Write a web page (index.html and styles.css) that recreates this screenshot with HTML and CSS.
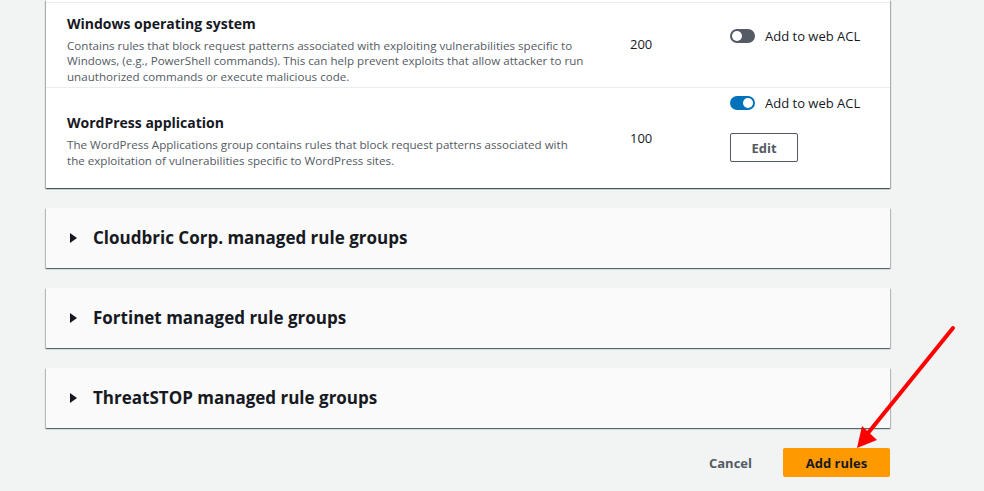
FILE: index.html
```html
<!DOCTYPE html>
<html lang="en">
<head>
<meta charset="utf-8">
<title>Add managed rule groups</title>
<link rel="stylesheet" href="styles.css">
</head>
<body>
<div class="page">
  <section class="panel">
    <div class="row row-windows">
      <div class="info">
        <div class="rule-title">Windows operating system</div>
        <div class="rule-desc">Contains rules that block request patterns associated with exploiting vulnerabilities specific to Windows, (e.g., PowerShell commands). This can help prevent exploits that allow attacker to run unauthorized commands or execute malicious code.</div>
      </div>
      <div class="capacity">200</div>
      <div class="actions">
        <label class="toggle-line"><span class="toggle"></span><span>Add to web ACL</span></label>
      </div>
    </div>
    <div class="row row-wordpress">
      <div class="info">
        <div class="rule-title">WordPress application</div>
        <div class="rule-desc">The WordPress Applications group contains rules that block request patterns associated with the exploitation of vulnerabilities specific to WordPress sites.</div>
      </div>
      <div class="capacity">100</div>
      <div class="actions">
        <label class="toggle-line"><span class="toggle on"></span><span>Add to web ACL</span></label>
        <button class="btn-edit">Edit</button>
      </div>
    </div>
  </section>

  <section class="expander"><span class="caret"></span><h2>Cloudbric Corp. managed rule groups</h2></section>
  <section class="expander"><span class="caret"></span><h2>Fortinet managed rule groups</h2></section>
  <section class="expander"><span class="caret"></span><h2>ThreatSTOP managed rule groups</h2></section>

  <div class="footer">
    <button class="btn-link">Cancel</button>
    <button class="btn-primary">Add rules</button>
  </div>
</div>
<svg class="annotation" width="984" height="491" viewBox="0 0 984 491">
  <line x1="953" y1="328" x2="864" y2="438" stroke="#ff0000" stroke-width="4" stroke-linecap="round"/>
  <polygon points="857,448 862,426 877,440" fill="#ff0000"/>
</svg>
</body>
</html>
```
FILE: styles.css
```css
* { box-sizing: border-box; }
html, body { margin: 0; padding: 0; }
body {
  background: #f2f3f3;
  font-family: "Open Sans", "Noto Sans", "Liberation Sans", Arial, sans-serif;
  color: #16191f;
  width: 984px;
  height: 491px;
  overflow: hidden;
  position: relative;
}
.page {
  width: 844px;
  margin-left: 46px;
  display: flex;
  flex-direction: column;
  gap: 20px;
}
.panel {
  background: #fff;
  padding-top: 2px;
  box-shadow: 0 1px 1px 0 rgba(0,28,36,.5), 1px 1px 1px 0 rgba(0,28,36,.25), -1px 1px 1px 0 rgba(0,28,36,.25);
}
.row {
  display: grid;
  grid-template-columns: 563px 100px 1fr;
  padding-left: 21px;
  border-top: 1px solid #eaeded;
}
.row-windows { height: 85px; }
.row-wordpress { height: 101px; }
.info { align-self: center; }
.row-windows .info { padding-top: 8px; }
.row-wordpress .info { padding-top: 5px; }
.rule-title {
  font-size: 14px;
  font-weight: 700;
  line-height: 20px;
  margin-bottom: 4px;
}
.rule-desc {
  max-width: 521px;
  font-size: 11.6px;
  line-height: 15.5px;
  color: #545b64;
}
.capacity {
  align-self: center;
  font-size: 13px;
  color: #16191f;
}
.row-windows .capacity { padding-bottom: 2px; }
.actions {
  display: flex;
  flex-direction: column;
  align-items: flex-start;
}
.row-windows .actions { padding-top: 23px; }
.row-wordpress .actions { padding-top: 5px; }
.toggle-line {
  display: flex;
  align-items: center;
  gap: 10px;
  height: 20px;
  font-size: 13px;
  color: #16191f;
}
.toggle {
  width: 25px;
  height: 14px;
  border-radius: 7px;
  background: #545b64;
  position: relative;
}
.toggle::after {
  content: "";
  position: absolute;
  top: 2px;
  left: 2px;
  width: 10px;
  height: 10px;
  border-radius: 50%;
  background: #fff;
}
.toggle.on { background: #0073bb; }
.toggle.on::after { left: 13px; }
.btn-edit {
  margin-top: 20px;
  width: 68px;
  height: 29px;
  background: #fff;
  border: 1px solid #545b64;
  border-radius: 2px;
  font-family: inherit;
  font-size: 13px;
  font-weight: 700;
  color: #545b64;
  padding: 0;
}
.expander {
  height: 60px;
  background: #fafafa;
  display: flex;
  align-items: center;
  padding-left: 24px;
  box-shadow: 0 1px 1px 0 rgba(0,28,36,.45), 1px 1px 1px 0 rgba(0,28,36,.2), -1px 1px 1px 0 rgba(0,28,36,.2);
}
.caret {
  width: 0;
  height: 0;
  border-top: 5px solid transparent;
  border-bottom: 5px solid transparent;
  border-left: 7px solid #16191f;
  margin-right: 16px;
}
.expander h2 {
  margin: 0;
  font-size: 17px;
  line-height: 24px;
  font-weight: 700;
  color: #16191f;
}
.footer {
  display: flex;
  justify-content: flex-end;
  align-items: center;
  gap: 11px;
}
.btn-link {
  background: none;
  border: none;
  font-family: inherit;
  font-size: 13px;
  font-weight: 700;
  color: #545b64;
  padding: 4px 20px;
}
.btn-primary {
  width: 107px;
  height: 29px;
  background: #ff9900;
  border: none;
  border-radius: 2px;
  font-family: inherit;
  font-size: 13px;
  font-weight: 700;
  color: #16191f;
  padding: 0;
}
.annotation {
  position: absolute;
  left: 0;
  top: 0;
  pointer-events: none;
}
```
